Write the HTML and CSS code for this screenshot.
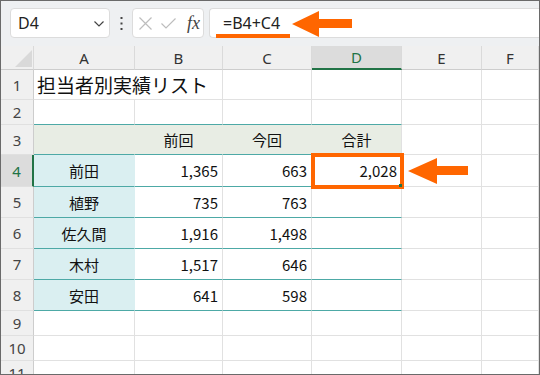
FILE: index.html
```html
<!DOCTYPE html>
<html lang="ja">
<head>
    <meta charset="UTF-8">
    <title>担当者別実績リスト</title>
    <link rel="stylesheet" href="styles.css">
</head>
<body>
    <div class="frame">
        <div class="toolbar">
            <div class="namebox">
                <span>D4</span>
                <svg class="chevron" width="10" height="6" viewBox="0 0 10 6"><polyline points="0.5,0.5 5,5 9.5,0.5" fill="none" stroke="#444" stroke-width="1.2"/></svg>
            </div>
            <div class="dots">
                <svg width="3" height="13" viewBox="0 0 3 13"><rect x="0.5" y="0" width="2" height="2" fill="#444"/><rect x="0.5" y="5.5" width="2" height="2" fill="#444"/><rect x="0.5" y="11" width="2" height="2" fill="#444"/></svg>
            </div>
            <div class="fx-box">
                <svg width="13" height="13" viewBox="0 0 13 13"><path d="M0.5 0.5 L12.5 12.5 M12.5 0.5 L0.5 12.5" stroke="#bdbdbd" stroke-width="1.2"/></svg>
                <svg width="15" height="11" viewBox="0 0 15 11"><polyline points="0.5,5.5 5,10 14.5,0.5" fill="none" stroke="#bdbdbd" stroke-width="1.2"/></svg>
                <span class="fx">fx</span>
            </div>
            <div class="formula">
                <span class="formula-text">=B4+C4</span>
                <span class="underline"></span>
                <svg class="arrow arrow-top" width="60" height="26" viewBox="0 0 60 26"><polygon points="0,13 27,0 27,8 60,8 60,17 27,17 27,26" fill="#ff6600"/></svg>
            </div>
        </div>

        <div class="sheet">
            <div class="row r-head">
                <div class="ch corner"><span class="tri"></span></div>
                <div class="ch">A</div>
                <div class="ch">B</div>
                <div class="ch">C</div>
                <div class="ch active">D</div>
                <div class="ch">E</div>
                <div class="ch">F</div>
            </div>
            <div class="row r-30">
                <div class="rh">1</div>
                <div class="c title span2">担当者別実績リスト</div>
                <div class="c"></div>
                <div class="c"></div>
                <div class="c"></div>
                <div class="c"></div>
            </div>
            <div class="row r-25">
                <div class="rh">2</div>
                <div class="c tb"></div>
                <div class="c tb"></div>
                <div class="c tb"></div>
                <div class="c tb"></div>
                <div class="c"></div>
                <div class="c"></div>
            </div>
            <div class="row r-30">
                <div class="rh">3</div>
                <div class="c tb band"></div>
                <div class="c tb band center">前回</div>
                <div class="c tb band center">今回</div>
                <div class="c tb band center last">合計</div>
                <div class="c"></div>
                <div class="c"></div>
            </div>
            <div class="row r-32">
                <div class="rh active">4</div>
                <div class="c tb name">前田</div>
                <div class="c tb num">1,365</div>
                <div class="c tb num">663</div>
                <div class="c tb num current">2,028
                    <span class="callout"></span>
                    <span class="handle"></span>
                    <svg class="arrow arrow-side" width="60" height="26" viewBox="0 0 60 26"><polygon points="0,13 29,0 29,8 60,8 60,17 29,17 29,26" fill="#ff6600"/></svg>
                </div>
                <div class="c"></div>
                <div class="c"></div>
            </div>
            <div class="row r-31">
                <div class="rh">5</div>
                <div class="c tb name">植野</div>
                <div class="c tb num">735</div>
                <div class="c tb num">763</div>
                <div class="c tb"></div>
                <div class="c"></div>
                <div class="c"></div>
            </div>
            <div class="row r-31">
                <div class="rh">6</div>
                <div class="c tb name">佐久間</div>
                <div class="c tb num">1,916</div>
                <div class="c tb num">1,498</div>
                <div class="c tb"></div>
                <div class="c"></div>
                <div class="c"></div>
            </div>
            <div class="row r-31">
                <div class="rh">7</div>
                <div class="c tb name">木村</div>
                <div class="c tb num">1,517</div>
                <div class="c tb num">646</div>
                <div class="c tb"></div>
                <div class="c"></div>
                <div class="c"></div>
            </div>
            <div class="row r-31">
                <div class="rh">8</div>
                <div class="c tb name">安田</div>
                <div class="c tb num">641</div>
                <div class="c tb num">598</div>
                <div class="c tb"></div>
                <div class="c"></div>
                <div class="c"></div>
            </div>
            <div class="row r-25">
                <div class="rh">9</div>
                <div class="c"></div><div class="c"></div><div class="c"></div>
                <div class="c"></div><div class="c"></div><div class="c"></div>
            </div>
            <div class="row r-25">
                <div class="rh">10</div>
                <div class="c"></div><div class="c"></div><div class="c"></div>
                <div class="c"></div><div class="c"></div><div class="c"></div>
            </div>
            <div class="row r-25">
                <div class="rh">11</div>
                <div class="c"></div><div class="c"></div><div class="c"></div>
                <div class="c"></div><div class="c"></div><div class="c"></div>
            </div>
        </div>
    </div>
</body>
</html>
```

FILE: styles.css
```css
body {
    margin: 0;
    font-family: "Noto Sans CJK JP", sans-serif;
    color: #111;
}
.frame {
    width: 540px;
    height: 375px;
    box-sizing: border-box;
    border: 1px solid #6a6a6a;
    overflow: hidden;
    background: #fff;
}

/* formula bar */
.toolbar {
    height: 45px;
    box-sizing: border-box;
    padding: 7px 0 0 9px;
    background: #eef0f2;
    display: flex;
    align-items: flex-start;
}
.namebox {
    width: 100px;
    height: 30px;
    box-sizing: border-box;
    border: 1px solid #dcdcdc;
    border-radius: 4px;
    background: #fff;
    display: flex;
    align-items: center;
    justify-content: space-between;
    padding: 0 5px 0 7px;
    font-family: "Noto Sans", sans-serif;
    font-size: 16px;
    color: #222;
}
.chevron {
    margin-top: 2px;
}
.dots {
    width: 22px;
    height: 30px;
    display: flex;
    align-items: center;
    justify-content: center;
}
.fx-box {
    width: 72px;
    height: 30px;
    box-sizing: border-box;
    border: 1px solid #dcdcdc;
    border-radius: 4px;
    background: #fff;
    display: flex;
    align-items: center;
    gap: 9px;
    padding-left: 6px;
}
.fx {
    font-family: "Liberation Serif", serif;
    font-style: italic;
    font-size: 18px;
    color: #444;
    margin-left: 2px;
}
.formula {
    position: relative;
    flex: 1;
    height: 30px;
    box-sizing: border-box;
    margin-left: 5px;
    border: 1px solid #dcdcdc;
    border-right: none;
    border-radius: 4px 0 0 4px;
    background: #fff;
    display: flex;
    align-items: center;
    padding-left: 13px;
}
.formula-text {
    font-family: "Noto Sans", sans-serif;
    font-size: 16px;
    color: #222;
}
.underline {
    position: absolute;
    left: 6px;
    top: 25px;
    width: 74px;
    height: 4px;
    background: #ff6600;
}
.arrow {
    position: absolute;
}
.arrow-top {
    left: 82px;
    top: 2px;
}

/* sheet */
.row {
    display: grid;
    grid-template-columns: 33px 101px 88px 89px 90px 80px 1fr;
}
.r-head { height: 24px; }
.r-25 { height: 25px; }
.r-30 { height: 30px; }
.r-31 { height: 31px; }
.r-32 { height: 32px; }

.ch, .rh, .c {
    box-sizing: border-box;
    display: flex;
    align-items: center;
    white-space: nowrap;
}
.ch {
    justify-content: center;
    background: #f0f0f0;
    border-right: 1px solid #dadada;
    border-bottom: 1px solid #cdcdcd;
    font-family: "Noto Sans", sans-serif;
    font-size: 15px;
    color: #333;
}
.ch.active {
    background: #dcdcdc;
    color: #217346;
    border-bottom: 2px solid #217346;
}
.corner {
    position: relative;
}
.tri {
    position: absolute;
    left: 14px;
    top: 4px;
    width: 17px;
    height: 17px;
    background: #d9d9d9;
    clip-path: polygon(100% 0, 100% 100%, 0 100%);
}
.rh {
    justify-content: center;
    background: #f0f0f0;
    border-right: 1px solid #cdcdcd;
    border-bottom: 1px solid #e0e0e0;
    font-family: "Noto Sans", sans-serif;
    font-size: 15px;
    color: #444;
}
.rh.active {
    background: #dcdcdc;
    color: #217346;
    border-right: 2px solid #217346;
}
.c {
    border-right: 1px solid #e1e1e1;
    border-bottom: 1px solid #e1e1e1;
    padding: 0 4px;
    font-size: 15px;
}
.span2 {
    grid-column: span 2;
}
.title {
    font-size: 19px;
    padding-left: 3px;
}
.tb {
    border-bottom-color: #4da9a6;
}
.band {
    background: #e8ede4;
    border-right-color: transparent;
}
.band.last {
    border-right-color: #e1e1e1;
}
.center {
    justify-content: center;
}
.name {
    justify-content: center;
    background: #daeff1;
    border-right-color: transparent;
}
.num {
    justify-content: flex-end;
}
.current {
    position: relative;
}
.callout {
    position: absolute;
    left: -1px;
    top: -2px;
    right: -3px;
    bottom: -3px;
    border: 4px solid #ff6600;
}
.handle {
    position: absolute;
    right: -1px;
    bottom: -1px;
    width: 3px;
    height: 3px;
    background: #217346;
}
.arrow-side {
    left: 96px;
    top: 3px;
}
```
